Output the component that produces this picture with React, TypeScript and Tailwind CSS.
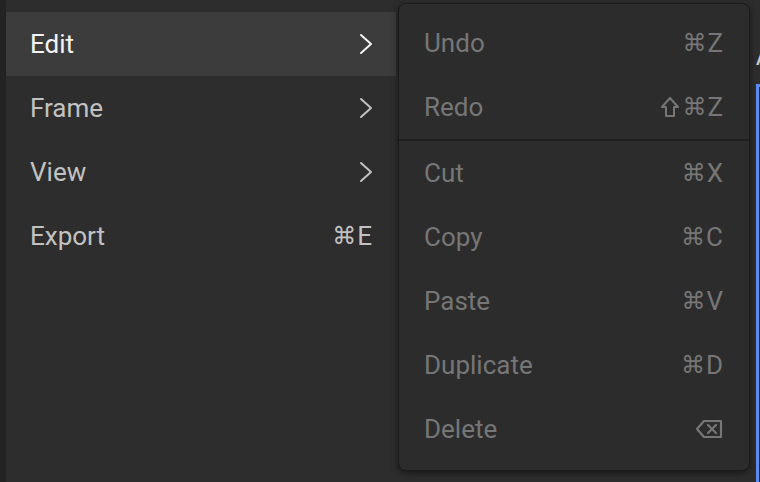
import React from "react";

type SubItem = { label: string; keys: React.ReactNode };

const Chevron = ({ className }: { className?: string }) => (
  <svg width="14" height="22" viewBox="0 0 14 22" fill="none" className={className}>
    <polyline points="2,2 12,11 2,20" stroke="currentColor" strokeWidth="2" strokeLinecap="round" strokeLinejoin="round" />
  </svg>
);

const Shift = () => (
  <svg width="20" height="22" viewBox="0 0 20 22" fill="none" className="mr-[2px]">
    <path d="M10 2 L18 11 L14 11 L14 20 L6 20 L6 11 L2 11 Z" stroke="currentColor" strokeWidth="2" strokeLinejoin="round" />
  </svg>
);

const Backspace = () => (
  <svg width="28" height="20" viewBox="0 0 28 20" fill="none">
    <path d="M9 2 H26 V18 H9 L2 10 Z" stroke="currentColor" strokeWidth="2.2" strokeLinejoin="round" />
    <path d="M13 6 L21 14 M21 6 L13 14" stroke="currentColor" strokeWidth="2.2" strokeLinecap="round" />
  </svg>
);

const Cmd = ({ k }: { k: string }) => (
  <span className="flex items-center">
    <span className="font-['DejaVu_Sans',sans-serif] text-[24px] mr-[1px]">⌘</span>
    <span>{k}</span>
  </span>
);

const top: SubItem[] = [
  { label: "Undo", keys: <Cmd k="Z" /> },
  {
    label: "Redo",
    keys: (
      <span className="flex items-center">
        <Shift />
        <Cmd k="Z" />
      </span>
    ),
  },
];

const bottom: SubItem[] = [
  { label: "Cut", keys: <Cmd k="X" /> },
  { label: "Copy", keys: <Cmd k="C" /> },
  { label: "Paste", keys: <Cmd k="V" /> },
  { label: "Duplicate", keys: <Cmd k="D" /> },
  { label: "Delete", keys: <Backspace /> },
];

const SubRow = ({ item }: { item: SubItem }) => (
  <div className="h-[64px] flex items-center justify-between pl-[25px] pr-[26px] text-[#767676]">
    <span>{item.label}</span>
    {item.keys}
  </div>
);

export default function App() {
  return (
    <div className="w-[760px] h-[482px] bg-[#2d2d2d] flex overflow-hidden font-['Roboto','Liberation_Sans',sans-serif] text-[26px] leading-none">
      <div className="w-[6px] h-full bg-[#232323] shrink-0" />

      <div className="w-[390px] shrink-0 pt-[12px] flex flex-col">
        <div className="h-[64px] flex items-center justify-between pl-[24px] pr-[23px] bg-[#3c3c3c] text-[#f4f4f4]">
          <span>Edit</span>
          <Chevron />
        </div>
        <div className="h-[64px] flex items-center justify-between pl-[24px] pr-[23px] text-[#c2c2c2]">
          <span>Frame</span>
          <Chevron />
        </div>
        <div className="h-[64px] flex items-center justify-between pl-[24px] pr-[23px] text-[#c2c2c2]">
          <span>View</span>
          <Chevron />
        </div>
        <div className="h-[64px] flex items-center justify-between pl-[24px] pr-[24px] text-[#c2c2c2]">
          <span>Export</span>
          <Cmd k="E" />
        </div>
      </div>

      <div className="mt-[3px] ml-[2px] w-[352px] h-[468px] shrink-0 rounded-[8px] border border-[#1b1b1b] bg-[#2c2c2c] shadow-[0_2px_6px_rgba(0,0,0,0.5)] pt-[7px] pb-[9px] flex flex-col">
        {top.map((it) => (
          <SubRow key={it.label} item={it} />
        ))}
        <div className="h-[2px] bg-[#1f1f1f]" />
        {bottom.map((it) => (
          <SubRow key={it.label} item={it} />
        ))}
      </div>

      <div className="ml-[6px] flex-1 flex flex-col">
        <div className="h-[84px] pt-[50px] text-[18px] text-[#c8c8c8] font-semibold">A</div>
        <div className="flex-1 border-l-[3px] border-t-[3px] border-[#5b8cf5] bg-[#2a2a2a]" />
      </div>
    </div>
  );
}
